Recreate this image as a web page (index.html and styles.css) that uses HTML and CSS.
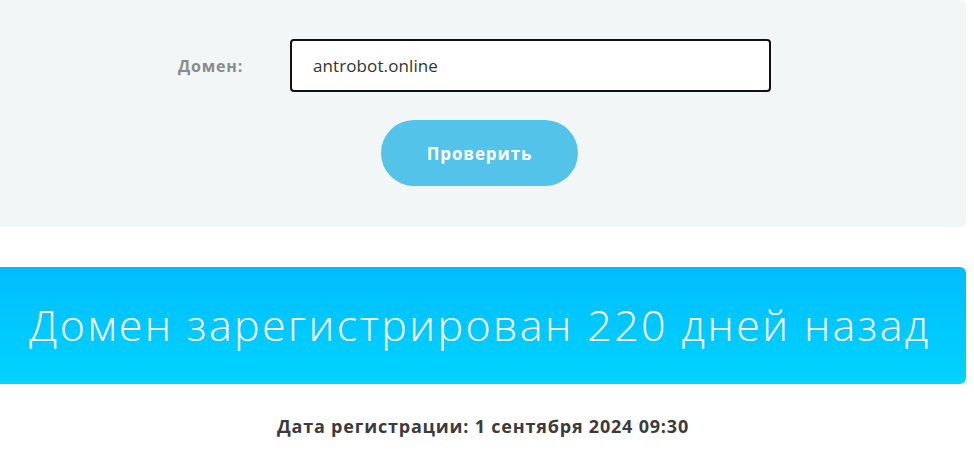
FILE: index.html
```html
<!DOCTYPE html>
<html lang="ru">
<head>
    <meta charset="UTF-8">
    <meta name="viewport" content="width=device-width, initial-scale=1.0">
    <title>Проверка возраста домена</title>
    <link rel="stylesheet" href="styles.css">
</head>
<body>
    <div class="page">
        <form class="check-panel" onsubmit="return false;">
            <div class="field-row">
                <label class="field-label" for="domain">Домен:</label>
                <input class="field-input" type="text" id="domain" value="antrobot.online">
            </div>
            <div class="button-row">
                <button class="check-button" type="submit">Проверить</button>
            </div>
        </form>

        <div class="result-banner">Домен зарегистрирован 220 дней назад</div>

        <p class="result-date">Дата регистрации: 1 сентября 2024 09:30</p>
    </div>
</body>
</html>
```

FILE: styles.css
```css
body {
    margin: 0;
    padding: 0;
    background: #ffffff;
    font-family: "Open Sans", Arial, sans-serif;
}
.page {
    width: 966px;
}
.check-panel {
    margin: 0;
    height: 227px;
    box-sizing: border-box;
    padding-top: 39px;
    background: #f3f6f7;
    border-radius: 0 6px 6px 0;
}
.field-row {
    display: flex;
    align-items: center;
    padding-left: 178px;
}
.field-label {
    width: 112px;
    font-size: 16px;
    font-weight: 700;
    letter-spacing: 0.8px;
    color: #8b8b8b;
}
.field-input {
    width: 481px;
    height: 53px;
    box-sizing: border-box;
    padding: 0 21px;
    border: 2px solid #111;
    border-radius: 4px;
    background: #fff;
    font-family: "Open Sans", Arial, sans-serif;
    font-size: 17px;
    letter-spacing: 0.1px;
    color: #333;
    outline: none;
}
.button-row {
    display: flex;
    justify-content: center;
    padding-right: 7px;
    margin-top: 28px;
}
.check-button {
    width: 197px;
    height: 66px;
    border: none;
    border-radius: 33px;
    background: #54c3ea;
    color: #fff;
    font-family: "Open Sans", Arial, sans-serif;
    font-size: 17px;
    font-weight: 700;
    letter-spacing: 0.9px;
    cursor: pointer;
}
.result-banner {
    margin-top: 40px;
    height: 117px;
    display: flex;
    align-items: center;
    justify-content: center;
    padding-right: 6px;
    padding-bottom: 3px;
    box-sizing: border-box;
    background: linear-gradient(to bottom, #00bdfd, #00d3ff);
    border-radius: 0 6px 6px 0;
    color: #fff;
    font-size: 43px;
    font-weight: 300;
    letter-spacing: 2.4px;
}
.result-date {
    margin: 30px 0 0;
    text-align: center;
    font-size: 18px;
    font-weight: 700;
    letter-spacing: 0.8px;
    color: #3b3b3b;
}
```
